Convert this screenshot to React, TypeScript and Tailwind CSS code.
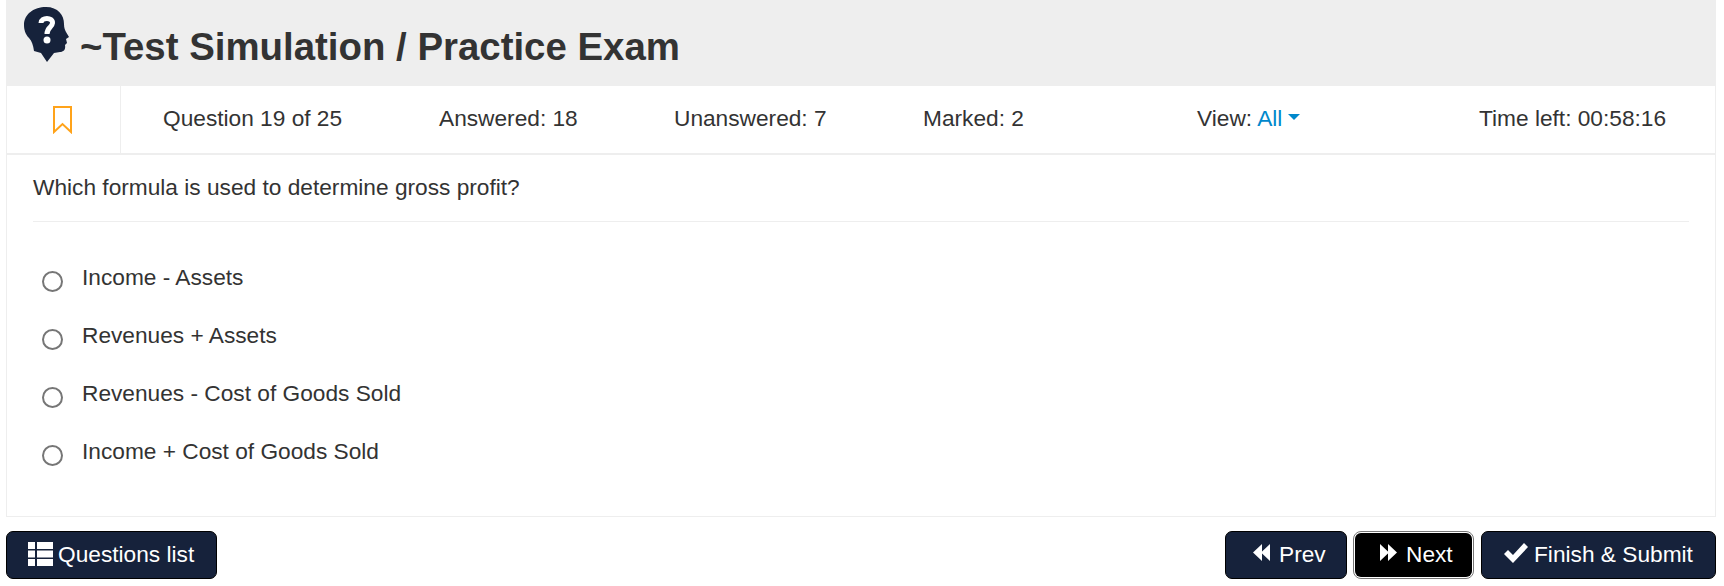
const options = ["Income - Assets", "Revenues + Assets", "Revenues - Cost of Goods Sold", "Income + Cost of Goods Sold"];

function HeadLogo() {
  return (
    <svg width="46" height="56" viewBox="0 0 46 56" className="shrink-0">
      <path
        fill="#16223b"
        d="M22 0C34 0 40 8 40 17C40 21 41 23 42 25L45 30L42 32L43 36L41 38C42 43 39 45 36 45L30 46L23 55L17 46L10 44C9 38 8 34 5 31C1 27 0 22 0 18C0 7 10 0 22 0Z"
      />
      <path d="M17 16C17 10 29 10 28.5 16C28 21 23 20 23 27" fill="none" stroke="#fff" strokeWidth="5" />
      <circle cx="23" cy="33" r="3.5" fill="#fff" />
    </svg>
  );
}

function BookmarkIcon() {
  return (
    <svg width="19" height="28" viewBox="0 0 19 28">
      <path d="M1 1H18V26L9.5 18L1 26Z" fill="none" stroke="#ffa31a" strokeWidth="2" />
    </svg>
  );
}

function ListIcon() {
  return (
    <svg width="25" height="24" viewBox="0 0 25 24" className="shrink-0" fill="#fff">
      <path d="M0 0H7V7H0Z M9 0H25V7H9Z M0 8.5H7V15.5H0Z M9 8.5H25V15.5H9Z M0 17H7V24H0Z M9 17H25V24H9Z" />
    </svg>
  );
}

function DoubleArrow({ flip }: { flip?: boolean }) {
  return (
    <svg width="17" height="17" viewBox="0 0 17 17" className={flip ? "mb-[3px] shrink-0 rotate-180" : "mb-[3px] shrink-0"} fill="#fff">
      <path d="M0 8.5L9 0V17Z M8 8.5L17 0V17Z" />
    </svg>
  );
}

function CheckIcon() {
  return (
    <svg width="24" height="20" viewBox="0 0 24 20" className="mb-[2px] shrink-0" fill="#fff">
      <path d="M0 11L4 7L9 12L20 0L24 4L9 20Z" />
    </svg>
  );
}

export default function App() {
  return (
    <div className="w-[1724px] h-[586px] bg-white px-[6px] text-[#333] font-['Liberation_Sans',Arial,sans-serif] overflow-hidden">
      <div className="w-[1710px]">
        {/* Title */}
        <div className="h-[86px] bg-[#eeeeee] flex pl-[18px]">
          <div className="pt-[7px]">
            <HeadLogo />
          </div>
          <h1 className="ml-[10px] mt-[22px] text-[38.4px] leading-[49px] font-bold">~Test Simulation / Practice Exam</h1>
        </div>

        <div className="border-x border-b border-[#eeeeee] h-[431px]">
          {/* Stats row */}
          <div className="h-[69px] border-b-2 border-[#eeeeee] flex items-center text-[22.7px]">
            <div className="w-[114px] h-full border-r border-[#eeeeee] pr-[3px] flex items-center justify-center">
              <BookmarkIcon />
            </div>
            <div className="w-[318px] pl-[42px] pb-[2px]">Question 19 of 25</div>
            <div className="w-[235px] pb-[2px]">Answered: 18</div>
            <div className="w-[249px] pb-[2px]">Unanswered: 7</div>
            <div className="w-[274px] pb-[2px]">Marked: 2</div>
            <div className="w-[282px] pb-[2px] flex items-center gap-[6px]">
              <span>
                View: <span className="text-[#0088cc]">All</span>
              </span>
              <span className="w-0 h-0 border-x-[6px] border-t-[6px] border-x-transparent border-t-[#0088cc] mb-[3px]" />
            </div>
            <div className="pb-[2px]">Time left: 00:58:16</div>
          </div>

          {/* Question */}
          <div className="px-[26px]">
            <div className="h-[67px] border-b border-[#eeeeee] pt-[16px] text-[22.7px] leading-[32px]">
              Which formula is used to determine gross profit?
            </div>
            <div className="pt-[34px] flex flex-col">
              {options.map((o) => (
                <label key={o} className="h-[58px] flex items-start text-[22.7px] leading-[42px]">
                  <span className="w-[21px] h-[21px] mt-[15px] ml-[9px] rounded-full border-2 border-[#767676] bg-white shrink-0" />
                  <span className="ml-[19px]">{o}</span>
                </label>
              ))}
            </div>
          </div>
        </div>

        {/* Buttons */}
        <div className="mt-[14px] flex items-center justify-between text-white text-[22.7px]">
          <button className="h-[48px] w-[211px] pb-[2px] rounded-[7px] bg-[#16223b] border border-black flex items-center pl-[21px] gap-[5px]">
            <ListIcon />
            Questions list
          </button>
          <div className="flex items-center">
            <button className="h-[48px] w-[122px] pb-[2px] rounded-[7px] bg-[#16223b] border border-black flex items-center pl-[27px] gap-[9px]">
              <DoubleArrow />
              Prev
            </button>
            <button className="ml-[8px] mr-[9px] h-[44px] w-[117px] pb-[2px] rounded-[6px] bg-black outline-1 outline-offset-1 outline-[#777] flex items-center pl-[25px] gap-[9px]">
              <DoubleArrow flip />
              Next
            </button>
            <button className="h-[48px] w-[235px] pb-[2px] rounded-[7px] bg-[#16223b] border border-black flex items-center pl-[22px] gap-[6px]">
              <CheckIcon />
              Finish &amp; Submit
            </button>
          </div>
        </div>
      </div>
    </div>
  );
}
